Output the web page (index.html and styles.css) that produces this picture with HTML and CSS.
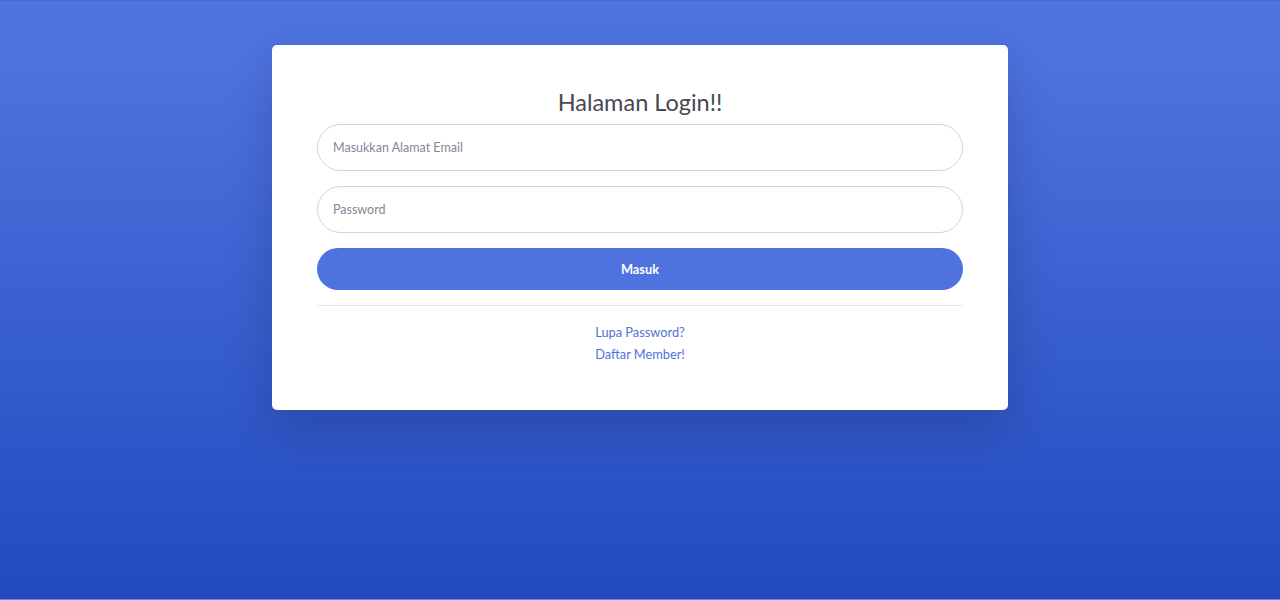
FILE: index.html
```html
<!DOCTYPE html>
<html lang="id">
<head>
<meta charset="utf-8">
<title>Halaman Login</title>
<link rel="stylesheet" href="styles.css">
</head>
<body>
<div class="page">
  <div class="card">
    <h1 class="title">Halaman Login!!</h1>
    <form class="form">
      <input class="field" type="email" placeholder="Masukkan Alamat Email">
      <input class="field" type="password" placeholder="Password">
      <button class="btn" type="button">Masuk</button>
    </form>
    <hr class="divider">
    <div class="links">
      <a class="link" href="#">Lupa Password?</a>
      <a class="link" href="#">Daftar Member!</a>
    </div>
  </div>
</div>
</body>
</html>
```

FILE: styles.css
```css
html, body {
  margin: 0;
  padding: 0;
}
body {
  font-family: Lato, "Open Sans", Arial, sans-serif;
}
.page {
  box-sizing: border-box;
  height: 600px;
  border-top: 1px solid #5567c2;
  border-bottom: 1px solid #6d8be4;
  background: linear-gradient(180deg, #4e73df 10%, #224abe 100%);
  padding-top: 44px;
}
.card {
  box-sizing: border-box;
  width: 736px;
  margin: 0 auto;
  background: #fff;
  border-radius: 5px;
  box-shadow: 0 16px 48px rgba(0, 0, 0, 0.175);
  padding: 43px 45px 45px;
}
.title {
  margin: 0 0 7px;
  text-align: center;
  font-size: 23.5px;
  line-height: 29px;
  font-weight: 400;
  color: #474852;
}
.form {
  display: flex;
  flex-direction: column;
  gap: 15px;
}
.field {
  box-sizing: border-box;
  height: 47px;
  width: 100%;
  border: 1px solid #d1d3e2;
  border-radius: 160px;
  padding: 0 15px;
  font-family: inherit;
  font-size: 12.5px;
  color: #6e707e;
  outline: none;
}
.field::placeholder {
  color: #858796;
}
.btn {
  height: 42px;
  width: 100%;
  border: none;
  border-radius: 160px;
  background: #4e73df;
  color: #fff;
  font-family: inherit;
  font-size: 12.8px;
  font-weight: 700;
}
.divider {
  margin: 15px 0;
  border: 0;
  border-top: 1px solid #e3e6f0;
}
.links {
  display: flex;
  flex-direction: column;
  align-items: center;
  gap: 1px;
  padding-top: 1px;
}
.link {
  font-size: 12.8px;
  line-height: 21px;
  color: #5072d6;
  text-decoration: none;
}
```
